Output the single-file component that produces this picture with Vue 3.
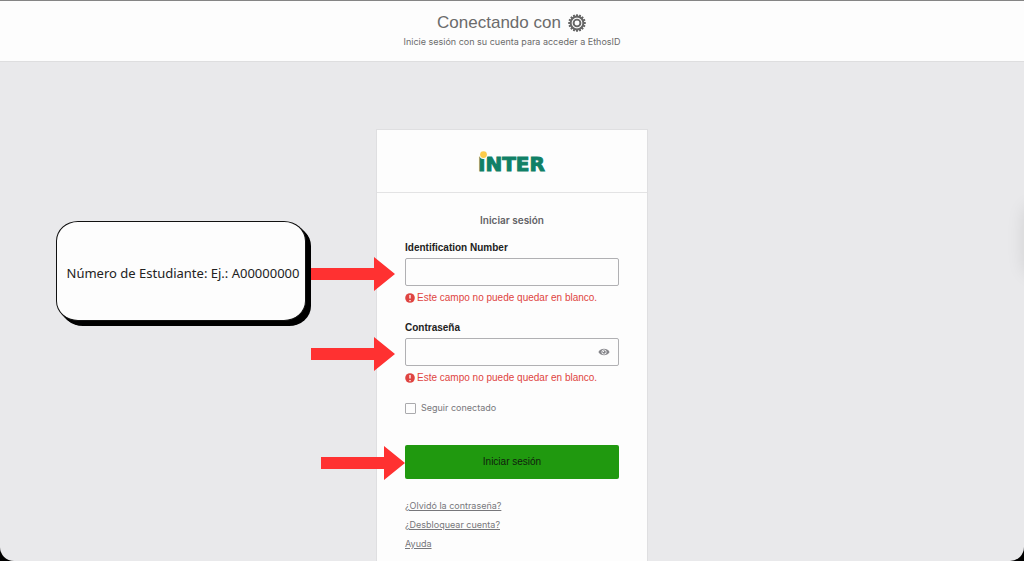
<script setup>
import { ref } from 'vue'

const userId = ref('')
const password = ref('')
const showPassword = ref(false)
const keepSignedIn = ref(false)
const blankError = 'Este campo no puede quedar en blanco.'
const links = ['¿Olvidó la contraseña?', '¿Desbloquear cuenta?', 'Ayuda']
const teeth = Array.from({ length: 16 }, (_, i) => i * 22.5)
</script>

<template>
  <div class="page">
    <header class="top">
      <h1 class="heading">
        <span>Conectando con</span>
        <svg class="gear" viewBox="0 0 20 20" aria-hidden="true">
          <rect v-for="a in teeth" :key="a" x="9" y="1.2" width="2" height="3" rx="0.5" fill="#666" :transform="`rotate(${a} 10 10)`" />
          <circle cx="10" cy="10" r="6.4" fill="none" stroke="#666" stroke-width="2" />
          <circle cx="10" cy="10" r="3.4" fill="none" stroke="#666" stroke-width="1.9" />
        </svg>
      </h1>
      <p class="sub">Inicie sesión con su cuenta para acceder a EthosID</p>
    </header>

    <main class="stage">
      <section class="card">
        <div class="brand">
          <svg class="logo" viewBox="0 0 76 28" role="img" aria-label="INTER">
            <text x="4" y="23" class="logo-text">INTER</text>
            <circle cx="9.5" cy="7" r="4" fill="#fdfdfd" />
            <circle cx="9.5" cy="6.6" r="3.4" fill="#fccb4a" />
          </svg>
        </div>

        <form class="form" novalidate @submit.prevent>
          <h2 class="title">Iniciar sesión</h2>

          <div class="field">
            <label for="user-id">Identification Number</label>
            <div class="control">
              <input id="user-id" v-model="userId" class="box" type="text" aria-describedby="user-error" />
              <div class="callout">Número de Estudiante: Ej.: A00000000</div>
              <svg class="arrow" viewBox="0 0 84 34" aria-hidden="true"><path d="M0 11H63V0L84 17L63 34V23H0Z" /></svg>
            </div>
            <p id="user-error" class="error">
              <svg viewBox="0 0 10 10" aria-hidden="true"><circle cx="5" cy="5" r="4.8" fill="#df4441" /><path d="M5 2V5.6M5 7V8.2" stroke="#fff" stroke-width="1.3" /></svg>
              {{ blankError }}
            </p>
          </div>

          <div class="field">
            <label for="password">Contraseña</label>
            <div class="control">
              <input id="password" v-model="password" class="box" :type="showPassword ? 'text' : 'password'" aria-describedby="pass-error" />
              <button class="eye" type="button" aria-label="Mostrar contraseña" @click="showPassword = !showPassword">
                <svg viewBox="0 0 12 8" aria-hidden="true">
                  <path d="M0.4 4C3 -0.4 9 -0.4 11.6 4C9 8.4 3 8.4 0.4 4Z" fill="#85858a" />
                  <circle cx="6" cy="4" r="2.5" fill="#fdfdfd" />
                  <circle cx="6" cy="4" r="1.8" fill="#85858a" />
                  <circle cx="5.4" cy="3.4" r="0.6" fill="#fdfdfd" />
                </svg>
              </button>
              <svg class="arrow" viewBox="0 0 84 34" aria-hidden="true"><path d="M0 11H63V0L84 17L63 34V23H0Z" /></svg>
            </div>
            <p id="pass-error" class="error">
              <svg viewBox="0 0 10 10" aria-hidden="true"><circle cx="5" cy="5" r="4.8" fill="#df4441" /><path d="M5 2V5.6M5 7V8.2" stroke="#fff" stroke-width="1.3" /></svg>
              {{ blankError }}
            </p>
          </div>

          <label class="keep"><input v-model="keepSignedIn" type="checkbox" />Seguir conectado</label>

          <div class="control action">
            <button class="submit" type="submit">Iniciar sesión</button>
            <svg class="arrow near" viewBox="0 0 84 34" aria-hidden="true"><path d="M0 11H63V0L84 17L63 34V23H0Z" /></svg>
          </div>

          <ul class="links">
            <li v-for="l in links" :key="l"><a href="#">{{ l }}</a></li>
          </ul>
        </form>
      </section>
    </main>
    <div class="edge"></div>
  </div>
</template>

<style>
body {
  margin: 0;
  background: #000;
}
</style>

<style scoped>
* {
  box-sizing: border-box;
}
.page {
  position: relative;
  display: flex;
  flex-direction: column;
  min-height: 100vh;
  overflow: hidden;
  background: #e9e9eb;
  border-radius: 0 0 14px 14px;
  font-family: Inter, "Liberation Sans", sans-serif;
  color: #222;
}
.top {
  padding: 12px 0;
  background: #fdfdfd;
  border-top: 1px solid #858585;
  border-bottom: 1px solid #dededf;
  text-align: center;
  color: #6b6b6b;
}
.heading {
  display: flex;
  justify-content: center;
  align-items: center;
  gap: 6px;
  margin: 0;
  font-family: "Liberation Sans", sans-serif;
  font-size: 17px;
  line-height: 20px;
  font-weight: 400;
}
.gear {
  width: 20px;
  height: 20px;
}
.sub {
  margin: 0;
  padding-top: 2px;
  font-size: 9px;
  line-height: 14px;
}
.stage {
  flex: 1;
  display: flex;
  justify-content: center;
  padding-top: 67px;
}
.card {
  width: 272px;
  background: #fdfdfd;
  border: 1px solid #dfdfe1;
  border-bottom: 0;
}
.brand {
  display: flex;
  justify-content: center;
  padding: 18px 0 16px;
  border-bottom: 1px solid #e3e3e4;
}
.logo {
  width: 76px;
  height: 28px;
}
.logo-text {
  font-family: "DejaVu Sans", sans-serif;
  font-size: 20px;
  font-weight: 700;
  fill: #108066;
  stroke: #108066;
  stroke-width: 1px;
}
.form {
  padding: 17px 28px 6px;
}
.title {
  margin: 0 0 10px;
  font-size: 10px;
  line-height: 20px;
  font-weight: 600;
  text-align: center;
  color: #626266;
}
.field {
  margin-bottom: 14px;
  font-family: "Liberation Sans", sans-serif;
  font-size: 10px;
  line-height: 16px;
}
.field label {
  display: block;
  margin-bottom: 2px;
  font-weight: 700;
}
.control {
  position: relative;
}
.box {
  display: block;
  width: 100%;
  height: 28px;
  padding: 0 8px;
  border: 1px solid #b0b0b3;
  border-radius: 2px;
  background: #fdfdfd;
  font: inherit;
  outline: none;
}
.eye {
  position: absolute;
  right: 8px;
  top: 7px;
  width: 14px;
  height: 14px;
  padding: 0 1px;
  border: 0;
  background: none;
}
.eye svg {
  display: block;
  width: 12px;
  height: 8px;
}
.error {
  display: flex;
  align-items: center;
  gap: 2px;
  margin: 4px 0 0;
  color: #df4441;
}
.error svg {
  width: 10px;
  height: 10px;
}
.keep {
  display: flex;
  align-items: center;
  gap: 5px;
  font-size: 9px;
  line-height: 16px;
  color: #77777b;
}
.keep input {
  appearance: none;
  width: 11px;
  height: 11px;
  margin: 0;
  border: 1px solid #aaaaad;
  border-radius: 1px;
  background: #fdfdfd;
}
.keep input:checked {
  background: #20990f;
}
.action {
  margin-top: 29px;
}
.submit {
  display: block;
  width: 100%;
  height: 34px;
  border: 0;
  border-radius: 2px;
  background: #20990f;
  color: #10200e;
  font: 400 10px/16px "Liberation Sans", sans-serif;
}
.links {
  margin: 17px 0 0;
  padding: 0;
  list-style: none;
  font-size: 9px;
  line-height: 19px;
}
.links a {
  color: #77777b;
  text-decoration: underline;
}
.arrow {
  position: absolute;
  right: calc(100% + 10px);
  top: -1px;
  width: 84px;
  height: 34px;
  fill: #ff3131;
}
.arrow.near {
  right: 100%;
  top: 1px;
}
.callout {
  position: absolute;
  right: calc(100% + 99px);
  top: -37px;
  display: flex;
  align-items: center;
  justify-content: center;
  width: 250px;
  height: 100px;
  padding: 4px 0 0 4px;
  border: 1px solid #111;
  border-radius: 22px / 20px;
  background: #fdfdfd;
  box-shadow: 2px 2px 0 #000, 4px 4px 0 #000, 5px 5px 0 #000;
  font-family: "Noto Sans", sans-serif;
  font-size: 13px;
  line-height: 20px;
  white-space: nowrap;
}
.edge {
  position: absolute;
  right: -24px;
  top: 205px;
  width: 24px;
  height: 70px;
  border-radius: 12px;
  box-shadow: 0 0 18px rgba(0, 0, 0, 0.1);
}
</style>
